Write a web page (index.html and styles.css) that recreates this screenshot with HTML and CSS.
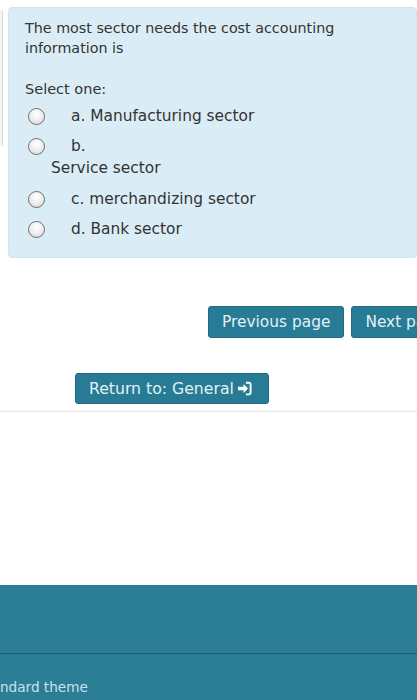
FILE: index.html
```html
<!DOCTYPE html>
<html>
<head>
<meta charset="utf-8">
<link rel="stylesheet" href="styles.css">
</head>
<body>
<div class="page">
  <div class="question-row">
    <div class="info-edge"></div>
    <div class="formulation">
      <div class="qtext">The most sector needs the cost accounting information is</div>
      <div class="prompt">Select one:</div>
      <div class="answers">
        <div class="opt"><span class="radio"></span><span class="label">a. Manufacturing sector</span></div>
        <div class="opt opt-b"><span class="radio"></span><span class="label">b.</span></div>
        <div class="opt-cont">Service sector</div>
        <div class="opt"><span class="radio"></span><span class="label">c. merchandizing sector</span></div>
        <div class="opt"><span class="radio"></span><span class="label">d. Bank sector</span></div>
      </div>
    </div>
  </div>

  <div class="nav-row">
    <span class="btn btn-prev">Previous page</span>
    <span class="btn btn-next">Next page</span>
  </div>

  <div class="return-row">
    <span class="btn btn-return">Return to: General<svg class="icon" viewBox="0 0 16 16" width="15" height="15"><path d="M1 6.2h6V3.2l4.8 4.8L7 12.8V9.8H1z" fill="#fff"/><path d="M9.5 1.8h3.2a1.8 1.8 0 0 1 1.8 1.8v8.8a1.8 1.8 0 0 1-1.8 1.8H9.5" fill="none" stroke="#fff" stroke-width="2"/></svg></span>
  </div>
  <div class="rule"></div>

  <div class="spacer"></div>

  <footer class="footer">
    <div class="footer-top"></div>
    <div class="footer-bottom"><span class="theme">ndard theme</span></div>
  </footer>
</div>
</body>
</html>
```

FILE: styles.css
```css
html, body {
  margin: 0;
  padding: 0;
  background: #ffffff;
}
body {
  font-family: "DejaVu Sans", Verdana, sans-serif;
  color: #333333;
  width: 417px;
  height: 700px;
  overflow: hidden;
}
.page {
  display: flex;
  flex-direction: column;
  height: 700px;
}
.question-row {
  display: flex;
  align-items: flex-start;
  padding-top: 7px;
}
.info-edge {
  width: 2px;
  height: 136px;
  margin-top: 3px;
  border-right: 1px solid #dcdcdc;
  background: #f4f4f4;
}
.formulation {
  margin-left: 5px;
  width: 409px;
  height: 251px;
  box-sizing: border-box;
  background: #daedf6;
  border: 1px solid #cfe6f0;
  border-radius: 4px;
  padding: 10px 0 0 16px;
}
.qtext {
  font-size: 14.3px;
  line-height: 20px;
  width: 330px;
}
.prompt {
  font-size: 14.5px;
  line-height: 20px;
  margin-top: 21px;
}
.answers {
  margin-top: 7px;
  font-size: 15.4px;
}
.opt {
  display: flex;
  align-items: center;
  height: 20px;
  margin-bottom: 10px;
}
.opt-b {
  margin-bottom: 2px;
}
.opt-cont {
  line-height: 20px;
  padding-left: 26px;
  margin-bottom: 11px;
}
.radio {
  width: 17px;
  height: 17px;
  box-sizing: border-box;
  border-radius: 50%;
  border: 1px solid #6f6f6f;
  background: radial-gradient(circle at 50% 35%, #ffffff 0%, #ececec 55%, #d0d0d0 100%);
  margin-left: 3px;
  flex: none;
}
.label {
  margin-left: 26px;
}
.nav-row {
  display: flex;
  gap: 7px;
  padding-left: 208px;
  margin-top: 48px;
  white-space: nowrap;
}
.btn {
  display: inline-flex;
  align-items: center;
  height: 32px;
  box-sizing: border-box;
  padding: 0 13px;
  background: #287b94;
  border: 1px solid #1f6b82;
  border-radius: 3px;
  color: #e2f1f6;
  font-size: 15.4px;
  white-space: nowrap;
  flex: none;
}
.return-row {
  display: flex;
  padding-left: 75px;
  margin-top: 35px;
}
.btn-return {
  padding: 0 16px 0 13px;
  height: 31px;
  font-size: 15.7px;
}
.icon {
  margin-left: 3px;
}
.rule {
  height: 1px;
  background: #e6e6e6;
  margin-top: 7px;
}
.spacer {
  flex: 1;
}
.footer {
  height: 115px;
  background: #2c7e97;
  display: flex;
  flex-direction: column;
}
.footer-top {
  height: 68px;
  border-bottom: 1px solid #1d5e72;
}
.footer-bottom {
  flex: 1;
  display: flex;
  align-items: flex-end;
  padding-bottom: 5px;
}
.theme {
  color: #c8e2ea;
  font-size: 13.6px;
  margin-left: 0;
}
```
